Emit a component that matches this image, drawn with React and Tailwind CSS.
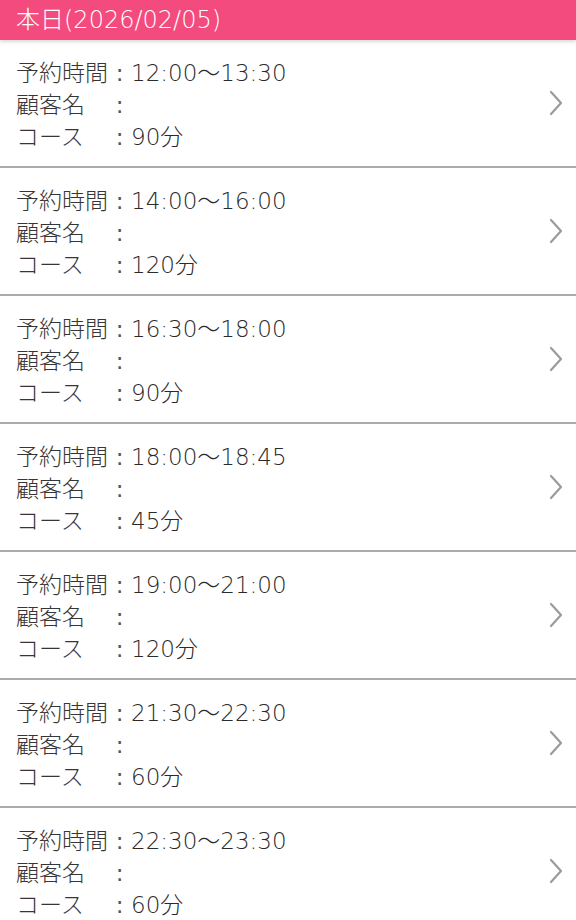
import React from "react";

const rows = [
  ["12:00～13:30", "90分"],
  ["14:00～16:00", "120分"],
  ["16:30～18:00", "90分"],
  ["18:00～18:45", "45分"],
  ["19:00～21:00", "120分"],
  ["21:30～22:30", "60分"],
  ["22:30～23:30", "60分"],
];

function Chevron() {
  return (
    <svg width="14" height="26" viewBox="0 0 14 26" className="shrink-0">
      <polyline points="2,2 12,13 2,24" fill="none" stroke="#9b9b9b" strokeWidth="2.2" strokeLinecap="round" strokeLinejoin="round" />
    </svg>
  );
}

function Line({ label, value }) {
  return (
    <div className="flex items-baseline">
      <span className="w-[92px]">{label}</span>
      <span className="inline-block w-[23px] text-center font-normal text-[#555555]">:</span>
      <span className="text-[#2a2a2a]">{value}</span>
    </div>
  );
}

export default function App() {
  return (
    <div
      className="w-[576px] h-[920px] overflow-hidden bg-white"
      style={{ fontFamily: '"DejaVu Sans", "Noto Sans CJK JP", sans-serif' }}
    >
      <div className="h-[40px] bg-[#f34b7e] flex items-center pl-[16px] text-white text-[24px] font-light leading-none relative z-10 shadow-[0_2px_3px_rgba(0,0,0,0.15)]">
        本日(2026/02/05)
      </div>
      {rows.map(([t, c], i) => (
        <div
          key={i}
          className="flex items-center justify-between h-[128px] border-b-2 border-[#ababab] pl-[16px] pr-[13px] pt-[4px]"
        >
          <div className="text-[23px] leading-[32px] text-[#363636] font-light">
            <Line label="予約時間" value={t} />
            <Line label="顧客名" value="" />
            <Line label="コース" value={c} />
          </div>
          <div className="-mt-[4px]">
            <Chevron />
          </div>
        </div>
      ))}
    </div>
  );
}
